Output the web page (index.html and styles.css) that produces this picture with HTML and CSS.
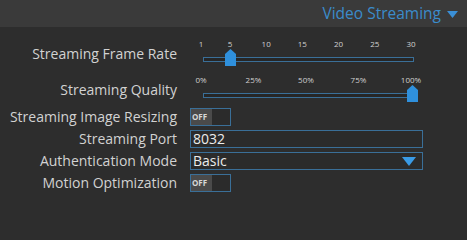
FILE: index.html
```html
<!DOCTYPE html>
<html>
<head>
<meta charset="utf-8">
<link rel="stylesheet" href="styles.css">
</head>
<body>
<div class="panel">
  <div class="header">
    <span class="title">Video Streaming</span>
    <svg class="caret" width="11" height="7" viewBox="0 0 11 7"><polygon points="0,0 11,0 5.5,7" fill="#3a8fd6"/></svg>
  </div>
  <div class="rows">
    <div class="row slider-row">
      <div class="label">Streaming Frame Rate</div>
      <div class="slider">
        <div class="ticks">
          <span class="tick" style="left:0%">1</span>
          <span class="tick" style="left:13.79%">5</span>
          <span class="tick" style="left:31.03%">10</span>
          <span class="tick" style="left:48.28%">15</span>
          <span class="tick" style="left:65.52%">20</span>
          <span class="tick" style="left:82.76%">25</span>
          <span class="tick" style="left:100%">30</span>
        </div>
        <div class="track-area">
          <div class="track"></div>
          <svg class="thumb" style="left:35px" width="11" height="17" viewBox="0 0 11 17"><path d="M5.5 0 L11 5 L11 17 L0 17 L0 5 Z" fill="#2f90dc"/></svg>
        </div>
      </div>
    </div>
    <div class="row slider-row">
      <div class="label">Streaming Quality</div>
      <div class="slider">
        <div class="ticks">
          <span class="tick" style="left:0%">0%</span>
          <span class="tick" style="left:25%">25%</span>
          <span class="tick" style="left:50%">50%</span>
          <span class="tick" style="left:75%">75%</span>
          <span class="tick" style="left:100%">100%</span>
        </div>
        <div class="track-area">
          <div class="track"></div>
          <svg class="thumb" style="left:217px" width="11" height="17" viewBox="0 0 11 17"><path d="M5.5 0 L11 5 L11 17 L0 17 L0 5 Z" fill="#2f90dc"/></svg>
        </div>
      </div>
    </div>
    <div class="row">
      <div class="label">Streaming Image Resizing</div>
      <div class="toggle"><span class="toggle-off">OFF</span></div>
    </div>
    <div class="row">
      <div class="label">Streaming Port</div>
      <div class="field">8032</div>
    </div>
    <div class="row">
      <div class="label">Authentication Mode</div>
      <div class="field select">
        <span>Basic</span>
        <svg class="select-caret" width="14" height="9" viewBox="0 0 14 9"><polygon points="0,0 14,0 7,9" fill="#3a9be6"/></svg>
      </div>
    </div>
    <div class="row">
      <div class="label">Motion Optimization</div>
      <div class="toggle"><span class="toggle-off">OFF</span></div>
    </div>
  </div>
</div>
</body>
</html>
```

FILE: styles.css
```css
html, body {
  margin: 0;
  padding: 0;
  background: #2d2d2d;
}
body {
  font-family: "Open Sans", "Noto Sans", sans-serif;
  width: 467px;
  height: 200px;
  overflow: hidden;
}
.panel {
  display: flex;
  flex-direction: column;
}
.header {
  height: 27px;
  background: #3a3a3a;
  display: flex;
  align-items: center;
  justify-content: flex-end;
  gap: 6px;
  padding-right: 9px;
}
.title {
  color: #3b8ccb;
  font-size: 15.5px;
  line-height: 27px;
}
.caret {
  display: block;
  margin-top: 1px;
}
.rows {
  display: flex;
  flex-direction: column;
  gap: 4px;
  padding-top: 11px;
}
.row {
  display: flex;
  align-items: center;
  gap: 13px;
  height: 18px;
}
.slider-row {
  height: 28px;
  margin-bottom: 2px;
}
.slider-row + .slider-row {
  margin-top: 2px;
}
.label {
  width: 177px;
  text-align: right;
  color: #d2d2d2;
  font-size: 14px;
  line-height: 18px;
  white-space: nowrap;
}
.slider-row .label {
  padding-top: 3px;
}
.slider {
  width: 240px;
  display: flex;
  flex-direction: column;
}
.ticks {
  position: relative;
  height: 11px;
  margin-left: 11px;
  width: 210px;
}
.tick {
  position: absolute;
  top: 0;
  transform: translateX(-50%);
  font-size: 8px;
  line-height: 11px;
  color: #d0d0d0;
}
.track-area {
  position: relative;
  height: 17px;
}
.track {
  position: absolute;
  left: 13px;
  top: 8px;
  width: 209px;
  height: 3px;
  border: 1px solid #3a6f98;
  background: #262626;
}
.thumb {
  position: absolute;
  top: 0;
  display: block;
}
.toggle {
  width: 39px;
  height: 16px;
  border: 1px solid #3a6f98;
  background: #2b2b2b;
  display: flex;
}
.toggle-off {
  width: 21px;
  background: #4a4a4a;
  color: #d8d8d8;
  font-size: 8px;
  font-weight: 700;
  line-height: 16px;
  padding-left: 1px;
  box-sizing: border-box;
}
.field {
  width: 229px;
  height: 16px;
  border: 1px solid #3a6f98;
  background: #2b2b2b;
  color: #ececec;
  font-size: 14px;
  line-height: 16px;
  padding-left: 2px;
  box-sizing: content-box;
  display: flex;
  align-items: center;
}
.select {
  justify-content: space-between;
  padding-right: 0;
}
.select-caret {
  display: block;
  margin-right: 6px;
}
```
